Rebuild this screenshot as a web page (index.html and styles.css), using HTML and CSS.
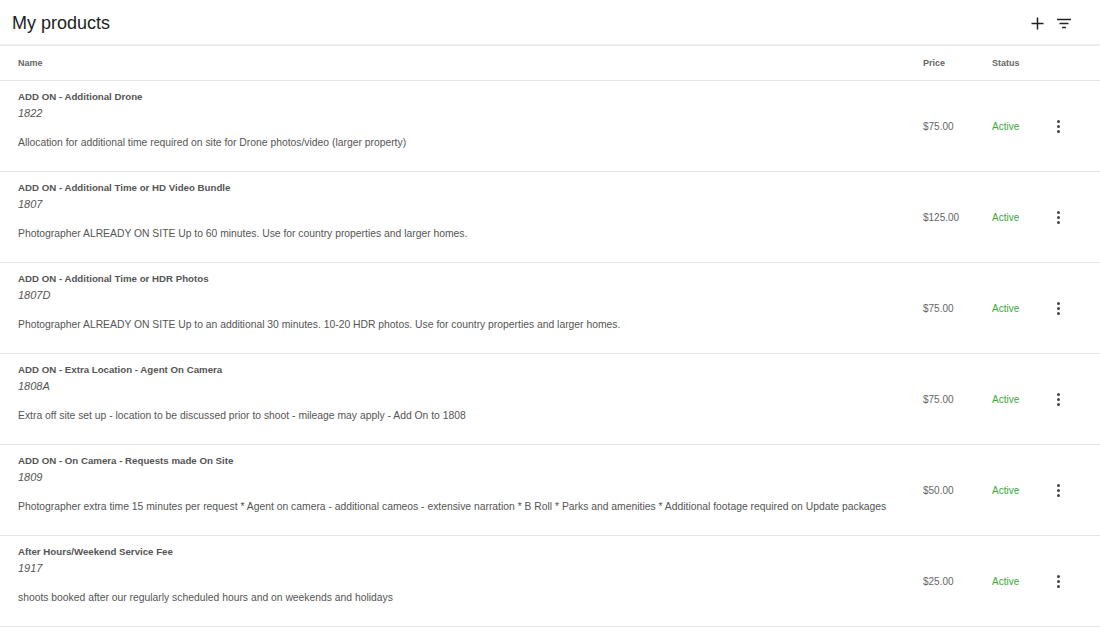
FILE: index.html
```html
<!DOCTYPE html>
<html lang="en">
<head>
    <meta charset="UTF-8">
    <meta name="viewport" content="width=device-width, initial-scale=1.0">
    <title>My products</title>
    <link rel="stylesheet" href="styles.css">
</head>

<body>
    <header class="page-header">
        <h1>My products</h1>
        <div class="header-actions">
            <button class="icon-btn" title="Add product">
                <svg width="13" height="13" viewBox="0 0 13 13"><path d="M6.5 0.5v12M0.5 6.5h12" stroke="#222" stroke-width="1.5" fill="none"/></svg>
            </button>
            <button class="icon-btn" title="Filter">
                <svg width="14" height="11" viewBox="0 0 14 11"><path d="M0 1.5h14M2.5 5.5h9M5 9.5h4" stroke="#222" stroke-width="1.5" fill="none"/></svg>
            </button>
        </div>
    </header>

    <div class="products">
        <div class="row head">
            <div>Name</div>
            <div>Price</div>
            <div>Status</div>
            <div></div>
        </div>

        <div class="row">
            <div class="info">
                <div class="name">ADD ON - Additional Drone</div>
                <div class="sku">1822</div>
                <div class="desc">Allocation for additional time required on site for Drone photos/video (larger property)</div>
            </div>
            <div class="price">$75.00</div>
            <div class="status">Active</div>
            <div class="more"><span></span><span></span><span></span></div>
        </div>

        <div class="row">
            <div class="info">
                <div class="name">ADD ON - Additional Time or HD Video Bundle</div>
                <div class="sku">1807</div>
                <div class="desc">Photographer ALREADY ON SITE Up to 60 minutes. Use for country properties and larger homes.</div>
            </div>
            <div class="price">$125.00</div>
            <div class="status">Active</div>
            <div class="more"><span></span><span></span><span></span></div>
        </div>

        <div class="row">
            <div class="info">
                <div class="name">ADD ON - Additional Time or HDR Photos</div>
                <div class="sku">1807D</div>
                <div class="desc">Photographer ALREADY ON SITE Up to an additional 30 minutes. 10-20 HDR photos. Use for country properties and larger homes.</div>
            </div>
            <div class="price">$75.00</div>
            <div class="status">Active</div>
            <div class="more"><span></span><span></span><span></span></div>
        </div>

        <div class="row">
            <div class="info">
                <div class="name">ADD ON - Extra Location - Agent On Camera</div>
                <div class="sku">1808A</div>
                <div class="desc">Extra off site set up - location to be discussed prior to shoot - mileage may apply - Add On to 1808</div>
            </div>
            <div class="price">$75.00</div>
            <div class="status">Active</div>
            <div class="more"><span></span><span></span><span></span></div>
        </div>

        <div class="row">
            <div class="info">
                <div class="name">ADD ON - On Camera - Requests made On Site</div>
                <div class="sku">1809</div>
                <div class="desc">Photographer extra time 15 minutes per request * Agent on camera - additional cameos - extensive narration * B Roll * Parks and amenities * Additional footage required on Update packages</div>
            </div>
            <div class="price">$50.00</div>
            <div class="status">Active</div>
            <div class="more"><span></span><span></span><span></span></div>
        </div>

        <div class="row">
            <div class="info">
                <div class="name">After Hours/Weekend Service Fee</div>
                <div class="sku">1917</div>
                <div class="desc">shoots booked after our regularly scheduled hours and on weekends and holidays</div>
            </div>
            <div class="price">$25.00</div>
            <div class="status">Active</div>
            <div class="more"><span></span><span></span><span></span></div>
        </div>
    </div>
</body>
</html>
```

FILE: styles.css
```css
body {
    font-family: "Liberation Sans", Arial, sans-serif;
    margin: 0;
    padding: 0;
    color: #666;
    background: #fff;
}
.page-header {
    display: flex;
    justify-content: space-between;
    align-items: center;
    height: 44px;
    padding: 0 29px 0 12px;
    border-bottom: 2px solid #ececec;
}
.page-header h1 {
    margin: 0;
    font-size: 18px;
    font-weight: normal;
    color: #222;
    position: relative;
    top: 1px;
}
.header-actions {
    display: flex;
    gap: 13px;
    align-items: center;
    position: relative;
    top: 1px;
}
.icon-btn {
    background: none;
    border: none;
    padding: 0;
    width: 14px;
    height: 14px;
    display: flex;
    align-items: center;
    justify-content: center;
    cursor: pointer;
}
.row {
    display: grid;
    grid-template-columns: 1fr 69px 52px 28px;
    align-items: center;
    padding: 0 28px 0 18px;
    border-bottom: 1px solid #e6e6e6;
    font-size: 10px;
}
.row.head {
    height: 34px;
    font-size: 9px;
    font-weight: bold;
    color: #666;
}
.info {
    padding: 8px 0 20px;
}
.name {
    font-weight: bold;
    font-size: 9.7px;
    line-height: 16px;
    color: #555;
}
.sku {
    font-style: italic;
    font-size: 11px;
    line-height: 16px;
    color: #555;
}
.desc {
    margin-top: 14px;
    font-size: 10.35px;
    line-height: 16px;
    color: #555;
}
.price {
    color: #666;
}
.status {
    color: #3aa83a;
}
.more {
    display: flex;
    flex-direction: column;
    align-items: center;
    gap: 2px;
    cursor: pointer;
}
.more span {
    width: 3px;
    height: 3px;
    border-radius: 50%;
    background: #444;
}
```
